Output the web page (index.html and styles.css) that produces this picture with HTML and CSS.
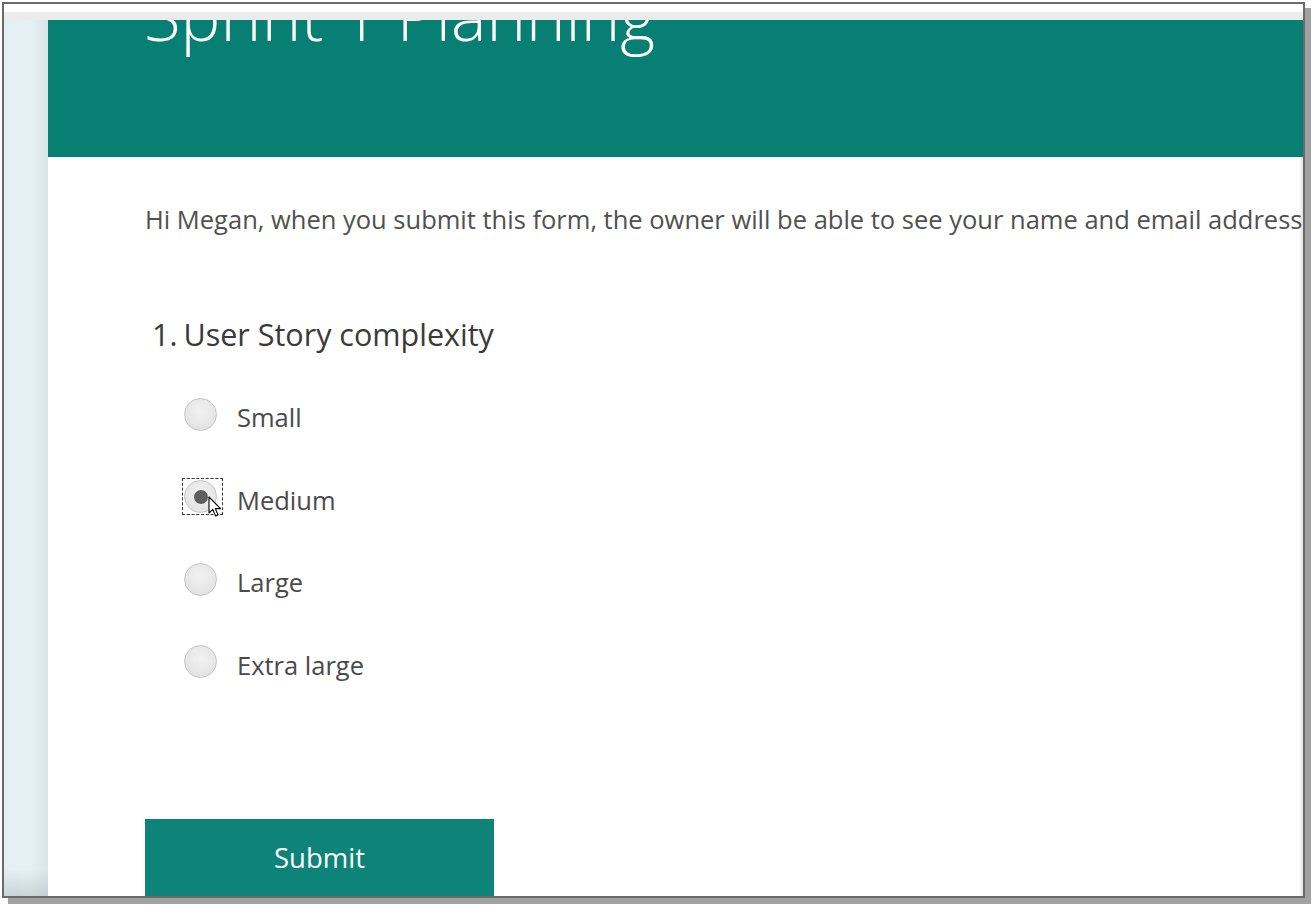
FILE: index.html
```html
<!DOCTYPE html>
<html>
<head>
<meta charset="utf-8">
<link rel="stylesheet" href="styles.css">
</head>
<body>
<div class="window">
  <div class="topbar"></div>
  <div class="main">
    <div class="leftstrip"></div>
    <div class="page">
      <div class="header">
        <h1 class="title">Sprint 1 Planning</h1>
      </div>
      <div class="content">
        <p class="intro">Hi Megan, when you submit this form, the owner will be able to see your name and email address.</p>
        <div class="question">
          <span class="qnum">1.</span><span class="qtext">User Story complexity</span>
        </div>
        <div class="options">
          <div class="option"><span class="radio"></span><span class="label">Small</span></div>
          <div class="option"><span class="radio checked"><span class="focus"></span><svg class="cursor" width="14" height="22" viewBox="0 0 14 22"><path d="M1 1 L1 17 L4.8 13.4 L7.6 20 L10 19 L7.3 12.6 L12.5 12.6 Z" fill="#fff" stroke="#000" stroke-width="1.1" stroke-linejoin="round"/></svg></span><span class="label">Medium</span></div>
          <div class="option"><span class="radio"></span><span class="label">Large</span></div>
          <div class="option"><span class="radio"></span><span class="label">Extra large</span></div>
        </div>
        <button class="submit">Submit</button>
      </div>
    </div>
  </div>
</div>
</body>
</html>
```
FILE: styles.css
```css
html, body {
  margin: 0;
  padding: 0;
  background: #ffffff;
}
body {
  font-family: "Open Sans", "Noto Sans", "Liberation Sans", sans-serif;
  overflow: hidden;
  width: 1312px;
  height: 906px;
}
.window {
  margin: 2px 0 0 2px;
  width: 1299px;
  height: 892px;
  border: 2px solid #6a6a6a;
  box-shadow: 6px 6px 0 #a2a2a2;
  display: flex;
  flex-direction: column;
  overflow: hidden;
  background: #fff;
}
.topbar {
  height: 16px;
  flex: none;
  background: linear-gradient(#ffffff 0%, #ffffff 45%, #ececec 55%, #ebebeb 100%);
}
.main {
  flex: 1;
  display: flex;
  min-height: 0;
}
.leftstrip {
  width: 44px;
  flex: none;
  background:
    linear-gradient(rgba(0,0,0,0) 97%, rgba(150,165,168,0.35) 100%),
    linear-gradient(90deg, #e3eff1 0%, #e5f0f2 60%, #dae5e8 100%);
}
.page {
  flex: 1;
  min-width: 0;
  overflow: hidden;
  background: #fff;
  box-shadow: inset -4px 0 3px -2px #e0e0e0;
}
.header {
  height: 137px;
  background: #077f72;
  overflow: hidden;
  padding-left: 96px;
}
.title {
  margin: -38px 0 0 0;
  font-size: 67px;
  line-height: 67px;
  font-weight: 300;
  color: #ffffff;
  white-space: nowrap;
}
.content {
  padding-left: 97px;
}
.intro {
  margin: 45px 0 0 0;
  font-size: 25.5px;
  line-height: 34px;
  color: #505050;
  white-space: nowrap;
}
.question {
  margin-top: 78px;
  margin-left: 7px;
  font-size: 30.5px;
  line-height: 40px;
  color: #3a3a3a;
  display: flex;
  gap: 6px;
}
.options {
  margin-top: 43.5px;
  margin-left: 39px;
  display: flex;
  flex-direction: column;
  gap: 49.5px;
}
.option {
  display: flex;
  align-items: center;
  gap: 20px;
  height: 33px;
}
.radio {
  position: relative;
  width: 31px;
  height: 31px;
  border-radius: 50%;
  border: 1.5px solid #c4c4c4;
  background: radial-gradient(circle at 50% 40%, #f2f2f2 0%, #e6e6e6 60%, #dcdcdc 100%);
  flex: none;
}
.radio.checked::after {
  content: "";
  position: absolute;
  left: 8.5px;
  top: 8.5px;
  width: 14px;
  height: 14px;
  border-radius: 50%;
  background: #5e5e5e;
}
.focus {
  position: absolute;
  left: -3.5px;
  top: -3px;
  width: 39px;
  height: 35px;
  border: 1px dashed #333;
}
.cursor {
  position: absolute;
  left: 22.5px;
  top: 15px;
  z-index: 2;
}
.label {
  font-size: 25.5px;
  color: #4a4a4a;
  line-height: 34px;
  margin-top: 6px;
}
.submit {
  display: block;
  margin-top: 141px;
  width: 349px;
  height: 100px;
  padding: 0 0 22px 0;
  border: none;
  background: #0e8478;
  color: #ffffff;
  font-family: "Open Sans", "Noto Sans", sans-serif;
  font-size: 27.5px;
  line-height: 38px;
  text-align: center;
}
```
